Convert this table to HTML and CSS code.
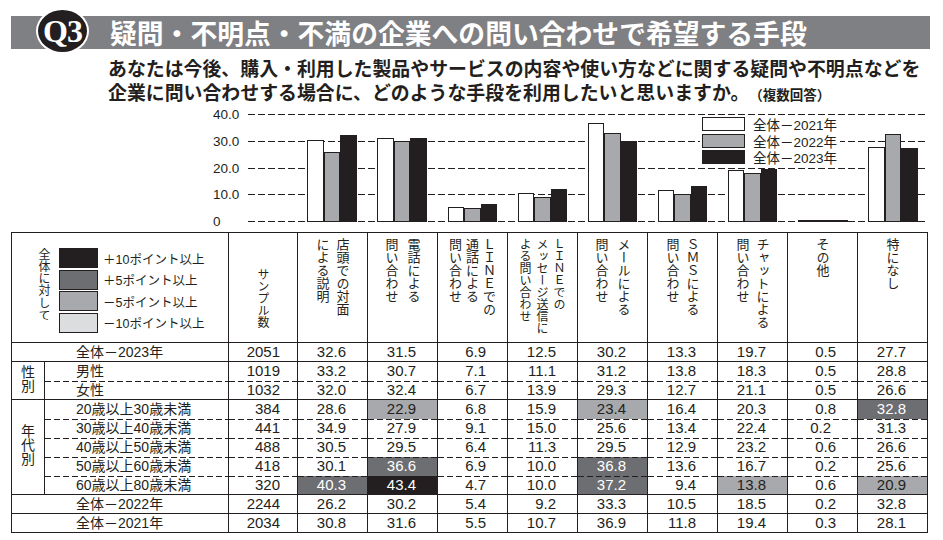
FILE: index.html
```html
<!DOCTYPE html>
<html lang="ja">
<head>
<meta charset="utf-8">
<title>Q3</title>
<link rel="stylesheet" href="styles.css">
</head>
<body>
<div class="page">
  <div class="qbar">
    <div class="qbadge">Q3</div>
    <h1 class="qtitle">疑問・不明点・不満の企業への問い合わせで希望する手段</h1>
  </div>
  <p class="question">あなたは今後、購入・利用した製品やサービスの内容や使い方などに関する疑問や不明点などを<br>企業に問い合わせする場合に、どのような手段を利用したいと思いますか。<span class="multi">（複数回答）</span></p>

  <div class="chart">
    <div class="yaxis"><span>40.0</span><span>30.0</span><span>20.0</span><span>10.0</span><span>0</span></div>
    <div class="plot">
      <div class="grid"><i></i><i></i><i></i><i></i><i></i></div>
      <div class="bars">
        <div class="grp"><b class="bar y21" style="height:82.4px"></b><b class="bar y22" style="height:70.1px"></b><b class="bar y23" style="height:87.2px"></b></div>
        <div class="grp"><b class="bar y21" style="height:84.5px"></b><b class="bar y22" style="height:80.8px"></b><b class="bar y23" style="height:84.3px"></b></div>
        <div class="grp"><b class="bar y21" style="height:14.7px"></b><b class="bar y22" style="height:14.4px"></b><b class="bar y23" style="height:18.5px"></b></div>
        <div class="grp"><b class="bar y21" style="height:28.6px"></b><b class="bar y22" style="height:24.6px"></b><b class="bar y23" style="height:33.4px"></b></div>
        <div class="grp"><b class="bar y21" style="height:98.7px"></b><b class="bar y22" style="height:89.1px"></b><b class="bar y23" style="height:80.8px"></b></div>
        <div class="grp"><b class="bar y21" style="height:31.6px"></b><b class="bar y22" style="height:28.1px"></b><b class="bar y23" style="height:35.6px"></b></div>
        <div class="grp"><b class="bar y21" style="height:51.9px"></b><b class="bar y22" style="height:49.5px"></b><b class="bar y23" style="height:52.7px"></b></div>
        <div class="grp"><b class="bar y21" style="height:2px"></b><b class="bar y22" style="height:2px"></b><b class="bar y23" style="height:2px"></b></div>
        <div class="grp"><b class="bar y21" style="height:75.2px"></b><b class="bar y22" style="height:87.7px"></b><b class="bar y23" style="height:74.1px"></b></div>
      </div>
      <ul class="legend">
        <li><span class="sw y21"></span>全体－2021年</li>
        <li><span class="sw y22"></span>全体－2022年</li>
        <li><span class="sw y23"></span>全体－2023年</li>
      </ul>
    </div>
  </div>

  <table class="data">
    <colgroup>
      <col class="c-grp"><col class="c-lbl"><col class="c-smp">
      <col><col><col><col><col><col><col><col><col>
    </colgroup>
    <thead>
      <tr class="hd">
        <th colspan="2" class="lgc">
          <div class="lg">
            <div class="lg-title">全体に対して</div>
            <ul class="lg-list">
              <li><span class="sw2 h1"></span>＋10ポイント以上</li>
              <li><span class="sw2 h2"></span>＋5ポイント以上</li>
              <li><span class="sw2 h3"></span>－5ポイント以上</li>
              <li><span class="sw2 h4"></span>－10ポイント以上</li>
            </ul>
          </div>
        </th>
        <th class="smp"><div class="vh vs">サンプル数</div></th>
        <th><div class="vh">店頭での対面<br>による説明</div></th>
        <th><div class="vh wide">電話による<br>問い合わせ</div></th>
        <th><div class="vh three">ＬＩＮＥでの<br>通話による<br>問い合わせ</div></th>
        <th><div class="vh three small">ＬＩＮＥでの<br>メッセージ送信に<br>よる問い合わせ</div></th>
        <th><div class="vh wide">メールによる<br>問い合わせ</div></th>
        <th><div class="vh">ＳＭＳによる<br>問い合わせ</div></th>
        <th><div class="vh">チャットによる<br>問い合わせ</div></th>
        <th><div class="vh">その他</div></th>
        <th><div class="vh">特になし</div></th>
      </tr>
    </thead>
    <tbody>
      <tr class="s">
        <td colspan="2" class="lbw">全体－2023年</td>
        <td class="n sm">2051</td><td class="n">32.6</td><td class="n">31.5</td><td class="n">6.9</td><td class="n">12.5</td><td class="n">30.2</td><td class="n">13.3</td><td class="n">19.7</td><td class="n">0.5</td><td class="n">27.7</td>
      </tr>
      <tr class="s">
        <td rowspan="2" class="gp"><span class="vt">性別</span></td>
        <td class="lb">男性</td>
        <td class="n sm">1019</td><td class="n">33.2</td><td class="n">30.7</td><td class="n">7.1</td><td class="n">11.1</td><td class="n">31.2</td><td class="n">13.8</td><td class="n">18.3</td><td class="n">0.5</td><td class="n">28.8</td>
      </tr>
      <tr class="d">
        <td class="lb">女性</td>
        <td class="n sm">1032</td><td class="n">32.0</td><td class="n">32.4</td><td class="n">6.7</td><td class="n">13.9</td><td class="n">29.3</td><td class="n">12.7</td><td class="n">21.1</td><td class="n">0.5</td><td class="n">26.6</td>
      </tr>
      <tr class="s">
        <td rowspan="5" class="gp"><span class="vt">年代別</span></td>
        <td class="lb">20歳以上30歳未満</td>
        <td class="n sm">384</td><td class="n">28.6</td><td class="n h3">22.9</td><td class="n">6.8</td><td class="n">15.9</td><td class="n h3">23.4</td><td class="n">16.4</td><td class="n">20.3</td><td class="n">0.8</td><td class="n h2">32.8</td>
      </tr>
      <tr class="d">
        <td class="lb">30歳以上40歳未満</td>
        <td class="n sm">441</td><td class="n">34.9</td><td class="n">27.9</td><td class="n">9.1</td><td class="n">15.0</td><td class="n">25.6</td><td class="n">13.4</td><td class="n">22.4</td><td class="n sh">0.2</td><td class="n">31.3</td>
      </tr>
      <tr class="d">
        <td class="lb">40歳以上50歳未満</td>
        <td class="n sm">488</td><td class="n">30.5</td><td class="n">29.5</td><td class="n">6.4</td><td class="n">11.3</td><td class="n">29.5</td><td class="n">12.9</td><td class="n">23.2</td><td class="n">0.6</td><td class="n">26.6</td>
      </tr>
      <tr class="d">
        <td class="lb">50歳以上60歳未満</td>
        <td class="n sm">418</td><td class="n">30.1</td><td class="n h2">36.6</td><td class="n">6.9</td><td class="n">10.0</td><td class="n h2">36.8</td><td class="n">13.6</td><td class="n">16.7</td><td class="n">0.2</td><td class="n">25.6</td>
      </tr>
      <tr class="d">
        <td class="lb">60歳以上80歳未満</td>
        <td class="n sm">320</td><td class="n h2">40.3</td><td class="n h1">43.4</td><td class="n">4.7</td><td class="n">10.0</td><td class="n h2">37.2</td><td class="n">9.4</td><td class="n h3">13.8</td><td class="n">0.6</td><td class="n h3">20.9</td>
      </tr>
      <tr class="s">
        <td colspan="2" class="lbw">全体－2022年</td>
        <td class="n sm">2244</td><td class="n">26.2</td><td class="n">30.2</td><td class="n">5.4</td><td class="n">9.2</td><td class="n">33.3</td><td class="n">10.5</td><td class="n">18.5</td><td class="n">0.2</td><td class="n">32.8</td>
      </tr>
      <tr class="s">
        <td colspan="2" class="lbw">全体－2021年</td>
        <td class="n sm">2034</td><td class="n">30.8</td><td class="n">31.6</td><td class="n">5.5</td><td class="n">10.7</td><td class="n">36.9</td><td class="n">11.8</td><td class="n">19.4</td><td class="n">0.3</td><td class="n">28.1</td>
      </tr>
    </tbody>
  </table>
</div>
</body>
</html>
```

FILE: styles.css
```css
* { box-sizing: border-box; margin: 0; padding: 0; }
body {
  margin: 0;
  background: #fff;
  color: #231f20;
  font-family: "Liberation Sans", "Noto Sans CJK JP", sans-serif;
  text-spacing-trim: space-all;
}
.page { width: 943px; height: 540px; padding-top: 16px; overflow: hidden; }

/* title bar */
.qbar {
  display: flex;
  align-items: center;
  height: 33px;
  margin-left: 11px;
  width: 919px;
  background: #7f8083;
}
.qbadge {
  flex: none;
  width: 53px;
  height: 46px;
  margin: 0 0 3px 25px;
  border: 2px solid #fff;
  border-radius: 50%;
  background: #231f20;
  color: #fff;
  font: 700 32px/42px "Liberation Serif", serif;
  letter-spacing: -1px;
  text-align: center;
}
.qtitle {
  margin-left: 21px;
  font: 700 26.8px/33px "Noto Sans CJK JP", sans-serif;
  color: #fff;
  white-space: nowrap;
}

/* question */
.question {
  margin: 7px 0 0 108px;
  height: 48px;
  font: 700 18.9px/24px "Noto Sans CJK JP", sans-serif;
  white-space: nowrap;
}
.multi { font-size: 13.5px; line-height: 1; }

/* chart */
.chart { display: flex; margin: 10px 0 0 11px; width: 917px; }
.yaxis {
  width: 229px;
  height: 108px;
  padding-left: 202px;
  display: flex;
  flex-direction: column;
  justify-content: space-between;
  align-items: flex-start;
  font-size: 13.5px;
}
.yaxis span { display: block; height: 1px; line-height: 1px; }
.plot { position: relative; width: 680px; height: 108px; margin-left: 8px; }
.grid {
  height: 100%;
  display: flex;
  flex-direction: column;
  justify-content: space-between;
}
.grid i {
  display: block;
  height: 1px;
  background: repeating-linear-gradient(90deg, #231f20 0 7px, transparent 7px 10px);
}
.bars {
  position: absolute;
  top: 0; right: 0; bottom: 0; left: 49px;
  display: grid;
  grid-template-columns: repeat(9, 1fr);
}
.grp { display: flex; justify-content: center; align-items: flex-end; }
.bar { display: block; width: 16.5px; border: 1px solid #231f20; }
.y21 { background: #fff; }
.y22 { background: #a7a9ac; }
.y23 { background: #231f20; }

.legend {
  position: absolute;
  left: 452px;
  top: 1px;
  list-style: none;
  background: #fff;
  padding: 1px 3px 1px 2px;
}
.legend li {
  display: flex;
  align-items: center;
  gap: 8px;
  height: 16.5px;
  font-size: 13.5px;
}
.legend .sw { width: 43px; height: 14px; border: 1.5px solid #231f20; }

/* table */
.data {
  margin: 10px 0 0 11px;
  width: 917px;
  border-collapse: collapse;
  table-layout: fixed;
  border: 1.5px solid #231f20;
}
.c-grp { width: 33px; }
.c-lbl { width: 184px; }
.c-smp { width: 69px; }
.data th {
  border: 1.5px solid #231f20;
  vertical-align: top;
  text-align: center;
  font-weight: 400;
  padding-top: 5px;
}
.data tr.hd { height: 110px; }
.data tbody tr { height: 19px; }
.data td {
  border-style: solid;
  border-color: #231f20;
  border-width: 0 1.5px;
  padding: 0;
  line-height: 18px;
  white-space: nowrap;
}
.data tr.s td { border-top: 1.5px solid #231f20; }
.data td.gp { border: 1.5px solid #231f20; text-align: center; vertical-align: middle; }
.data tr.d td {
  background-image: repeating-linear-gradient(90deg, #231f20 0 6px, transparent 6px 9px);
  background-size: 100% 1px;
  background-repeat: no-repeat;
  background-position: 0 0;
}
.vt {
  display: inline-block;
  writing-mode: vertical-rl;
  font: 14px/14px "Noto Sans CJK JP", sans-serif;
}
.lb { padding-left: 31px !important; font-size: 14px; }
.lbw { padding-left: 64px !important; font-size: 14px; }
.data td.n { text-align: right; padding-right: 21px; font-size: 15px; }
.data td.sm { padding-right: 17px; }
.data td.sh { padding-right: 26px; }

.h1 { background-color: #231f20; color: #fff; }
.h2 { background-color: #6d6e71; color: #fff; }
.h3 { background-color: #a7a9ac; }
.h4 { background-color: #dcdddf; }

.vh {
  display: inline-block;
  vertical-align: top;
  writing-mode: vertical-rl;
  text-align: left;
  font: 13px/20px "Noto Sans CJK JP", sans-serif;
}
.vh.wide { line-height: 22px; }
.vh.three { line-height: 17px; }
.vh.small { font-size: 12px; }
.data th.smp { vertical-align: middle; padding-top: 20px; }
.vh.vs { font-size: 12px; }

/* legend inside table header */
.data th.lgc { vertical-align: middle; text-align: left; padding: 6px 0 0 25px; }
.lg { display: flex; align-items: flex-start; gap: 8px; }
.lg-title {
  writing-mode: vertical-rl;
  font: 12px/14px "Noto Sans CJK JP", sans-serif;
  letter-spacing: 0.3px;
}
.lg-list { list-style: none; }
.lg-list li {
  display: flex;
  align-items: center;
  gap: 5px;
  height: 21.5px;
  font-size: 12.5px;
}
.sw2 { display: block; width: 39px; height: 20px; border: 1.5px solid #231f20; }
```
